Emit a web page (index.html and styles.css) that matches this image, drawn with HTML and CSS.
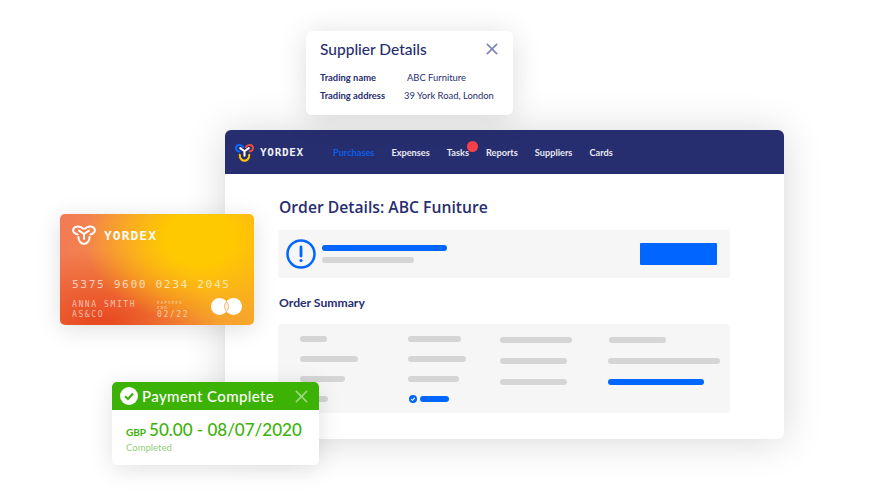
FILE: index.html
```html
<!DOCTYPE html>
<html lang="en">
<head>
  <meta charset="UTF-8">
  <title>Yordex</title>
  <meta name="viewport" content="width=device-width, initial-scale=1.0">
  <link rel="stylesheet" href="styles.css">
</head>
<body>

  <div class="stage">

    <!-- main window -->
    <section class="window">
      <header class="topbar">
        <div class="brand">
          <svg class="brand-logo" viewBox="0 0 20 20" fill="none" stroke-width="2.2" stroke-linecap="round" stroke-linejoin="round">
            <path d="M8.500 4.200 C7 1.400 1.600 1.200 1.100 4.800 C.800 7.300 2.800 8.900 4.500 9" stroke="#0a6cff"/>
            <path d="M11.500 4.200 C13 1.400 18.400 1.200 18.900 4.800 C19.200 7.300 17.200 8.900 15.500 9" stroke="#ef4b3a"/>
            <path d="M5 12.500 C4.800 17 8 18.600 10 18.600 C12 18.600 15.200 17 15 12.500" stroke="#ffc400"/>
            <path d="M5.500 5.500 L10 8.700 L14.500 5.500 M10 8.700 V13.500" stroke="#fff"/>
          </svg>
          <span class="brand-name">YORDEX</span>
        </div>
        <nav class="menu">
          <a class="menu-item active">Purchases</a>
          <a class="menu-item">Expenses</a>
          <a class="menu-item tasks">Tasks<span class="dot"></span></a>
          <a class="menu-item">Reports</a>
          <a class="menu-item">Suppliers</a>
          <a class="menu-item">Cards</a>
        </nav>
      </header>

      <div class="content">
        <h1>Order Details: ABC Funiture</h1>

        <div class="alert panel">
          <svg class="alert-icon" viewBox="0 0 30 30" fill="none">
            <circle cx="15" cy="15" r="13.500" stroke="#0066ff" stroke-width="2.500"/>
            <path d="M15 8 V17" stroke="#0066ff" stroke-width="2.800" stroke-linecap="round"/>
            <circle cx="15" cy="21.500" r="1.600" fill="#0066ff"/>
          </svg>
          <div class="alert-lines">
            <span class="bar blue w125"></span>
            <span class="bar w92"></span>
          </div>
          <span class="alert-btn"></span>
        </div>

        <h2>Order Summary</h2>

        <div class="summary panel">
          <div class="col col1">
            <span class="bar w27"></span>
            <span class="bar w58"></span>
            <span class="bar w45"></span>
            <span class="bar w28"></span>
          </div>
          <div class="col col2">
            <span class="bar w53"></span>
            <span class="bar w58"></span>
            <span class="bar w51"></span>
            <div class="status">
              <svg class="status-icon" viewBox="0 0 8 8">
                <circle cx="4" cy="4" r="4" fill="#0066ff"/>
                <path d="M2.200 4.100 L3.500 5.300 L5.800 2.800" fill="none" stroke="#fff" stroke-width="1.100"/>
              </svg>
              <span class="bar blue w29"></span>
            </div>
          </div>
          <div class="col col3">
            <span class="bar w72"></span>
            <span class="bar w67"></span>
            <span class="bar w67"></span>
          </div>
          <div class="col col4">
            <span class="bar w57 nudge"></span>
            <span class="bar w112"></span>
            <span class="bar blue w96"></span>
          </div>
        </div>
      </div>
    </section>

    <!-- supplier popup -->
    <section class="supplier">
      <div class="supplier-head">
        <h3>Supplier Details</h3>
        <svg class="close" viewBox="0 0 14 14" fill="none" stroke="#8288b5" stroke-width="2">
          <path d="M1 1 L13 13 M13 1 L1 13"/>
        </svg>
      </div>
      <dl class="supplier-row">
        <dt>Trading name</dt>
        <dd class="name">ABC Furniture</dd>
      </dl>
      <dl class="supplier-row">
        <dt>Trading address</dt>
        <dd>39 York Road, London</dd>
      </dl>
    </section>

    <!-- credit card -->
    <section class="card">
      <div class="card-brand">
        <svg class="card-logo" viewBox="0 0 24 20" fill="none" stroke="#fff" stroke-width="2" stroke-linecap="round" stroke-linejoin="round">
          <path d="M11 3.600 C9 .800 2.800 .600 1.400 3.800 C.400 6.400 2.400 8.800 5.600 9.400"/>
          <path d="M13 3.600 C15 .800 21.200 .600 22.600 3.800 C23.600 6.400 21.600 8.800 18.400 9.400"/>
          <path d="M6.400 12 C6.400 16.800 9.800 18.800 12 18.800 C14.200 18.800 17.600 16.800 17.600 12"/>
          <path d="M7 5.600 L12 9 L17 5.600 M12 9 V14"/>
        </svg>
        <span class="card-name">YORDEX</span>
      </div>
      <div class="card-number">5375 9600 0234 2045</div>
      <div class="card-bottom">
        <div class="card-holder">ANNA SMITH<br>AS&amp;CO</div>
        <div class="card-expiry">
          <span class="expiry-label">EXPIRES<br>END</span>
          <span class="expiry-date">02/22</span>
        </div>
        <svg class="card-mark" viewBox="0 0 31 17">
          <circle cx="8.500" cy="8.500" r="8.500" fill="#fff"/>
          <circle cx="22.500" cy="8.500" r="8.500" fill="#fff"/>
          <path d="M15.500 3.600 C12.800 6.400 12.800 10.600 15.500 13.400 C18.200 10.600 18.200 6.400 15.500 3.600 Z" fill="#fdf0d8" stroke="#e8923a" stroke-width=".6"/>
        </svg>
      </div>
    </section>

    <!-- payment toast -->
    <section class="payment">
      <div class="payment-head">
        <svg class="payment-check" viewBox="0 0 18 18">
          <circle cx="9" cy="9" r="9" fill="#fff"/>
          <path d="M5 9.300 L8 12 L13 6.500" fill="none" stroke="#3cb205" stroke-width="2.200"/>
        </svg>
        <span class="payment-title">Payment Complete</span>
        <svg class="payment-close" viewBox="0 0 14 14" fill="none" stroke="#9bd882" stroke-width="1.800">
          <path d="M1 1 L13 13 M13 1 L1 13"/>
        </svg>
      </div>
      <div class="payment-body">
        <div class="amount"><span class="currency">GBP</span><span>50.00 - 08/07/2020</span></div>
        <div class="payment-status">Completed</div>
      </div>
    </section>

  </div>

</body>
</html>
```

FILE: styles.css
```css
body {
  margin: 0;
  background: #fff;
  font-family: 'Lato', sans-serif;
  color: #272e6f;
}

.stage {
  position: relative;
  width: 890px;
  height: 500px;
  overflow: hidden;
}

/* main window */
.window {
  position: absolute;
  left: 225px;
  top: 130px;
  width: 559px;
  height: 309px;
  background: #fff;
  border-radius: 6px;
  box-shadow: 0 2px 40px rgba(0, 0, 0, 0.16);
  overflow: hidden;
}

.topbar {
  display: flex;
  align-items: center;
  height: 44px;
  padding-left: 10px;
  background: #272e6f;
}

.brand {
  display: flex;
  align-items: center;
  gap: 6px;
  width: 98px;
}

.brand-logo {
  width: 19px;
  height: 19px;
}

.brand-name {
  color: #eef0f6;
  font-family: 'DejaVu Sans Mono', monospace;
  font-size: 11px;
  font-weight: 700;
  letter-spacing: 0.700px;
}

.menu {
  display: flex;
  gap: 17px;
}

.menu-item {
  position: relative;
  color: #e8e9f2;
  font-size: 9.200px;
  font-weight: 700;
}

.menu-item.active {
  color: #0a5fe8;
}

.dot {
  position: absolute;
  left: 20px;
  top: -6px;
  width: 11px;
  height: 11px;
  border-radius: 50%;
  background: #f9404a;
}

.content {
  padding: 0 54px 0 53px;
}

h1 {
  margin: 0;
  padding: 23px 0 0 1px;
  font-family: 'Open Sans', sans-serif;
  font-size: 15.700px;
  line-height: 20px;
  font-weight: 600;
}

.panel {
  background: #f6f6f6;
  border-radius: 3px;
}

.alert {
  display: flex;
  align-items: center;
  height: 48px;
  margin-top: 13px;
  padding: 0 13px 0 8px;
}

.alert-icon {
  width: 30px;
  height: 30px;
}

.alert-lines {
  display: flex;
  flex-direction: column;
  gap: 6px;
  margin-left: 6px;
}

.alert-btn {
  width: 77px;
  height: 22px;
  margin-left: auto;
  background: #0066ff;
  border-radius: 1px;
}

h2 {
  margin: 17px 0 13px;
  padding-left: 1px;
  font-size: 12.200px;
  line-height: 16px;
  font-weight: 700;
}

.summary {
  display: flex;
  height: 89px;
}

.col {
  display: flex;
  flex-direction: column;
  align-items: flex-start;
}

.col1, .col2 {
  gap: 14px;
  padding-top: 12px;
}

.col1 {
  width: 130px;
  padding-left: 22px;
  box-sizing: border-box;
}

.col2 {
  width: 92px;
}

.col3, .col4 {
  gap: 15px;
  padding-top: 13px;
}

.col3 {
  width: 108px;
}

.bar {
  display: block;
  height: 6px;
  border-radius: 3px;
  background: #d5d5d5;
}

.bar.blue { background: #0066ff; }

.nudge { margin-left: 1px; }

.w27 { width: 27px; }
.w28 { width: 28px; }
.w29 { width: 29px; }
.w45 { width: 45px; }
.w51 { width: 51px; }
.w53 { width: 53px; }
.w57 { width: 57px; }
.w58 { width: 58px; }
.w67 { width: 67px; }
.w72 { width: 72px; }
.w92 { width: 92px; }
.w96 { width: 96px; }
.w112 { width: 112px; }
.w125 { width: 125px; }

.status {
  display: flex;
  align-items: center;
  gap: 3px;
  margin-left: 1px;
  margin-top: -1px;
}

.status-icon {
  width: 8px;
  height: 8px;
}

/* supplier popup */
.supplier {
  position: absolute;
  left: 306px;
  top: 31px;
  width: 207px;
  height: 84px;
  padding: 0 14px;
  box-sizing: border-box;
  background: #fff;
  border-radius: 6px;
  box-shadow: 0 4px 30px rgba(0, 0, 0, 0.14);
}

.supplier-head {
  display: flex;
  align-items: center;
  justify-content: space-between;
  height: 36px;
  margin-bottom: 4px;
}

.supplier-head h3 {
  margin: 0;
  font-size: 15.500px;
  font-weight: 500;
}

.close {
  width: 12px;
  height: 12px;
  margin-right: 1px;
}

.supplier-row {
  display: flex;
  margin: 0 0 6px;
  height: 12px;
  align-items: center;
  font-size: 9.400px;
}

.supplier-row dt {
  width: 84px;
  font-weight: 700;
}

.supplier-row dd {
  margin: 0;
}

.supplier-row dd.name {
  margin-left: 3px;
}

/* credit card */
.card {
  position: absolute;
  left: 60px;
  top: 214px;
  width: 194px;
  height: 111px;
  padding: 11px 12px 0 12px;
  box-sizing: border-box;
  border-radius: 5px;
  background:
    radial-gradient(ellipse 115px 85px at 72% 22%, #ffc900 30%, rgba(255, 201, 0, 0) 100%),
    radial-gradient(ellipse 120px 75px at 20% 100%, #e84b22 10%, rgba(232, 75, 34, 0) 100%),
    linear-gradient(100deg, #f27a55, #f7a828);
  box-shadow: 0 4px 24px rgba(0, 0, 0, 0.13);
  color: #fff;
}

.card-brand {
  display: flex;
  align-items: center;
  gap: 8px;
}

.card-logo {
  width: 24px;
  height: 20px;
}

.card-name {
  font-family: 'DejaVu Sans Mono', monospace;
  font-size: 13px;
  font-weight: 700;
  letter-spacing: 1px;
  opacity: 0.95;
}

.card-number {
  margin-top: 33px;
  font-family: 'DejaVu Sans Mono', monospace;
  font-size: 11.300px;
  letter-spacing: 1.550px;
  line-height: 14px;
  color: rgba(255, 255, 255, 0.68);
  white-space: nowrap;
}

.card-bottom {
  display: flex;
  align-items: center;
  margin-top: 6px;
  font-family: 'DejaVu Sans Mono', monospace;
  color: rgba(255, 255, 255, 0.62);
}

.card-holder {
  width: 85px;
  font-size: 8px;
  letter-spacing: 1.600px;
  line-height: 10px;
}

.card-expiry {
  display: flex;
  flex-direction: column;
  width: 54px;
}

.expiry-label {
  font-size: 4px;
  line-height: 5px;
  letter-spacing: 1.300px;
}

.expiry-date {
  font-size: 8px;
  line-height: 10px;
  letter-spacing: 1.600px;
}

.card-mark {
  width: 31px;
  height: 17px;
  margin-bottom: 6px;
}

/* payment toast */
.payment {
  position: absolute;
  left: 112px;
  top: 382px;
  width: 207px;
  height: 83px;
  background: #fff;
  border-radius: 5px;
  box-shadow: 0 4px 24px rgba(0, 0, 0, 0.12);
  overflow: hidden;
}

.payment-head {
  display: flex;
  align-items: center;
  height: 28px;
  padding: 0 11px 0 8px;
  background: #3cb205;
}

.payment-check {
  width: 18px;
  height: 18px;
}

.payment-title {
  margin-left: 4px;
  color: #fff;
  font-size: 15px;
  font-weight: 500;
  letter-spacing: 0.400px;
}

.payment-close {
  width: 13px;
  height: 13px;
  margin-left: auto;
}

.payment-body {
  padding: 10px 14px;
  color: #3cb205;
}

.amount {
  display: flex;
  align-items: baseline;
  gap: 3px;
  font-size: 17px;
  line-height: 20px;
  font-weight: 500;
  white-space: nowrap;
}

.currency {
  font-size: 10px;
  font-weight: 700;
}

.payment-status {
  margin-top: 0;
  font-size: 9.500px;
  line-height: 12px;
  color: #93d07a;
}
```
